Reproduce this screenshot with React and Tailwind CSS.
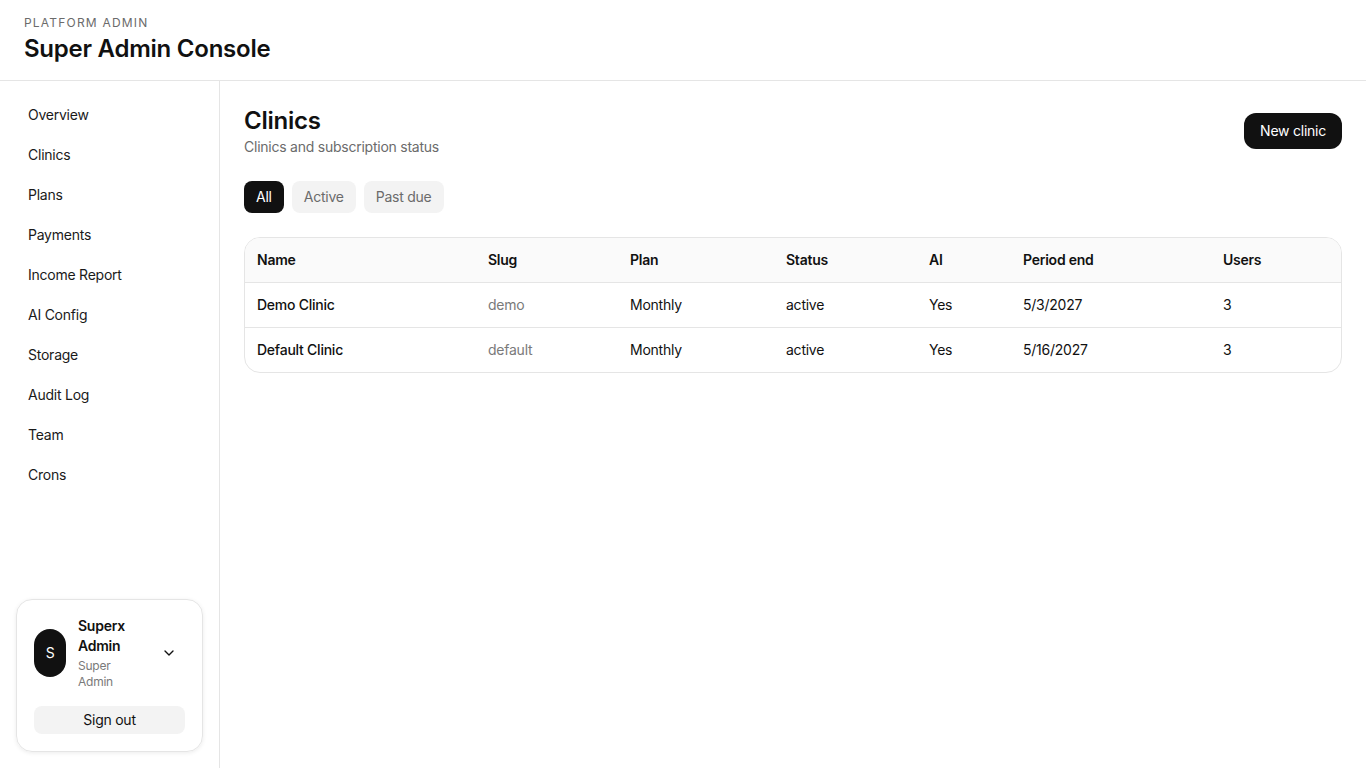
import { ChevronDown } from "lucide-react";

const navItems = [
  "Overview",
  "Clinics",
  "Plans",
  "Payments",
  "Income Report",
  "AI Config",
  "Storage",
  "Audit Log",
  "Team",
  "Crons",
];

const clinics = [
  { name: "Demo Clinic", slug: "demo", plan: "Monthly", status: "active", ai: "Yes", end: "5/3/2027", users: 3 },
  { name: "Default Clinic", slug: "default", plan: "Monthly", status: "active", ai: "Yes", end: "5/16/2027", users: 3 },
];

export default function App() {
  return (
    <div
      className="min-h-screen w-full bg-white text-[#111111] flex flex-col tracking-[-0.015em]"
      style={{ fontFamily: "Inter, 'Noto Sans', sans-serif" }}
    >
      <header className="h-[81px] border-b border-[#e5e5e5] px-6 flex flex-col justify-center">
        <div className="text-xs tracking-[0.1em] text-[#6b6b6b] leading-4">PLATFORM ADMIN</div>
        <h1 className="text-2xl font-semibold leading-8 mt-0.5">Super Admin Console</h1>
      </header>

      <div className="flex flex-1 h-[687px]">
        <aside className="w-[220px] shrink-0 border-r border-[#e5e5e5] flex flex-col justify-between px-4 pt-[14px] pb-4">
          <nav className="flex flex-col">
            {navItems.map((item) => (
              <a key={item} className="px-3 h-10 flex items-center text-sm text-[#1a1a1a]">
                {item}
              </a>
            ))}
          </nav>

          <div className="w-[187px] rounded-2xl border border-[#e5e5e5] shadow-[0_1px_4px_rgba(0,0,0,0.08)] px-[17px] pt-4 pb-[17px]">
            <div className="flex items-center gap-3">
              <div className="w-8 h-12 rounded-full bg-[#111111] text-white flex items-center justify-center text-sm shrink-0">
                S
              </div>
              <div className="flex-1 min-w-0 w-[64px]">
                <div className="text-sm font-semibold leading-5">Superx<br />Admin</div>
                <div className="text-xs text-[#7a7a7a] leading-4 mt-0.5">Super<br />Admin</div>
              </div>
              <ChevronDown className="w-4 h-4 mr-2" strokeWidth={2} />
            </div>
            <button className="mt-4 w-full h-7 rounded-lg bg-[#f3f3f3] text-sm text-[#111111]">Sign out</button>
          </div>
        </aside>

        <main className="flex-1 px-6 pt-6">
          <div className="flex items-start justify-between">
            <div>
              <h2 className="text-2xl font-semibold leading-8">Clinics</h2>
              <p className="text-sm text-[#6b6b6b] leading-5">Clinics and subscription status</p>
            </div>
            <button className="mt-2 h-9 px-4 rounded-xl bg-[#111111] text-white text-sm">New clinic</button>
          </div>

          <div className="flex gap-2 mt-6">
            <button className="h-8 px-3 rounded-lg bg-[#111111] text-white text-sm">All</button>
            <button className="h-8 px-3 rounded-lg bg-[#f3f3f3] text-[#6b6b6b] text-sm">Active</button>
            <button className="h-8 px-3 rounded-lg bg-[#f3f3f3] text-[#6b6b6b] text-sm">Past due</button>
          </div>

          <div className="mt-6 rounded-2xl border border-[#e5e5e5] overflow-hidden">
            <table className="w-full text-sm text-left border-collapse">
              <thead className="bg-[#fafafa]">
                <tr className="h-[44px]">
                  <th className="px-3 font-semibold w-[231px]">Name</th>
                  <th className="px-3 font-semibold w-[142px]">Slug</th>
                  <th className="px-3 font-semibold w-[156px]">Plan</th>
                  <th className="px-3 font-semibold w-[143px]">Status</th>
                  <th className="px-3 font-semibold w-[94px]">AI</th>
                  <th className="px-3 font-semibold w-[200px]">Period end</th>
                  <th className="px-3 font-semibold">Users</th>
                </tr>
              </thead>
              <tbody>
                {clinics.map((c) => (
                  <tr key={c.slug} className="h-[45px] border-t border-[#e5e5e5]">
                    <td className="px-3 font-medium">{c.name}</td>
                    <td className="px-3 text-[#7a7a7a]">{c.slug}</td>
                    <td className="px-3">{c.plan}</td>
                    <td className="px-3">{c.status}</td>
                    <td className="px-3">{c.ai}</td>
                    <td className="px-3">{c.end}</td>
                    <td className="px-3">{c.users}</td>
                  </tr>
                ))}
              </tbody>
            </table>
          </div>
        </main>
      </div>
    </div>
  );
}
